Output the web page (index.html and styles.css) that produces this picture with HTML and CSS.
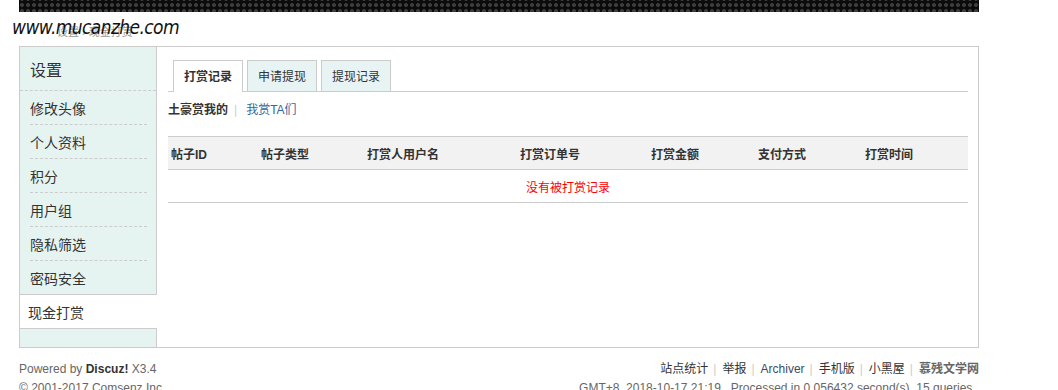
FILE: index.html
```html
<!DOCTYPE html>
<html lang="zh-CN">
<head>
  <meta charset="UTF-8" />
  <title>现金打赏 - 慕残文学网</title>
  <link rel="stylesheet" href="styles.css">
</head>
<body>

  <div class="topbar"></div>

  <div class="crumb">
    <span class="crumb-text">设置 › 现金打赏</span>
    <span class="watermark">www.mucanzhe.com</span>
  </div>

  <div class="wrap">
    <div class="side">
      <h2>设置</h2>
      <ul>
        <li>修改头像</li>
        <li>个人资料</li>
        <li>积分</li>
        <li>用户组</li>
        <li>隐私筛选</li>
        <li class="last">密码安全</li>
        <li class="active">现金打赏</li>
      </ul>
    </div>

    <div class="main">
      <ul class="tabs">
        <li class="on">打赏记录</li>
        <li>申请提现</li>
        <li>提现记录</li>
      </ul>

      <div class="subtabs">
        <b>土豪赏我的</b><span class="pipe">|</span><a href="#">我赏TA们</a>
      </div>

      <table class="list">
        <tr>
          <th class="c1">帖子ID</th>
          <th class="c2">帖子类型</th>
          <th class="c3">打赏人用户名</th>
          <th class="c4">打赏订单号</th>
          <th class="c5">打赏金额</th>
          <th class="c6">支付方式</th>
          <th class="c7">打赏时间</th>
        </tr>
        <tr>
          <td colspan="7" class="empty">没有被打赏记录</td>
        </tr>
      </table>
    </div>
  </div>

  <div class="footer">
    <div class="left">
      <p>Powered by <b>Discuz!</b> X3.4</p>
      <p>© 2001-2017 Comsenz Inc.</p>
    </div>
    <div class="right">
      <p>
        <a href="#">站点统计</a><span class="pipe">|</span><a href="#">举报</a><span class="pipe">|</span><a href="#" class="arc">Archiver</a><span class="pipe">|</span><a href="#">手机版</a><span class="pipe">|</span><a href="#">小黑屋</a><span class="pipe">|</span><b>慕残文学网</b>
      </p>
      <p class="gmt">GMT+8, 2018-10-17 21:19 , Processed in 0.056432 second(s), 15 queries .</p>
    </div>
  </div>

</body>
</html>
```

FILE: styles.css
```css
body {
  margin: 0;
  font-family: "Liberation Sans", "Noto Sans CJK SC", sans-serif;
  font-size: 12px;
  color: #333;
  background: #fff;
}

ul {
  list-style: none;
  margin: 0;
  padding: 0;
}

a {
  color: #336699;
  text-decoration: none;
}

.topbar {
  width: 960px;
  height: 12px;
  margin-left: 19px;
  background-color: #0b0b0b;
  background-image: radial-gradient(circle, #3c3c3c 1.8px, transparent 2.2px);
  background-size: 6px 6px;
  background-position: 0 2px;
}

.crumb {
  position: relative;
  height: 34px;
  margin-left: 19px;
}

.crumb-text {
  display: block;
  padding: 11px 0 0 38px;
  color: #999;
  font-size: 11px;
}

.watermark {
  position: absolute;
  left: -7px;
  top: 4px;
  font-family: "DejaVu Sans Condensed", "DejaVu Sans", sans-serif;
  font-style: italic;
  font-size: 19px;
  letter-spacing: -0.6px;
  color: #111;
}

.wrap {
  display: flex;
  width: 958px;
  height: 300px;
  margin-left: 19px;
  border: 1px solid #ccc;
}

/* left menu */
.side {
  width: 136px;
  background: #e6f4f1;
  border-right: 1px solid #ccc;
}

.side h2 {
  margin: 0;
  height: 41px;
  padding: 2px 0 0 10px;
  line-height: 44px;
  font-size: 16px;
  font-weight: normal;
  border-bottom: 1px dashed #ccc;
}

.side li {
  margin: 0 9px 0 10px;
  height: 31px;
  padding-top: 2px;
  line-height: 33px;
  font-size: 14px;
  border-bottom: 1px dashed #ccc;
}

.side li.last {
  border-bottom: none;
}

.side li.active {
  margin: 0 -1px 0 0;
  padding-left: 8px;
  background: #fff;
  border-top: 1px solid #ccc;
  border-bottom: 1px solid #ccc;
}

/* right content */
.main {
  flex: 1;
  padding: 13px 10px 0 11px;
}

.tabs {
  display: flex;
  gap: 4px;
  padding-left: 5px;
  border-bottom: 1px solid #ccc;
}

.tabs li {
  height: 30px;
  line-height: 32px;
  padding: 0 10px;
  margin-bottom: -1px;
  border: 1px solid #ccc;
  border-bottom: none;
  background: #e8f3f3;
  font-size: 12px;
}

.tabs li.on {
  background: #fff;
  font-weight: bold;
  height: 31px;
}

.subtabs {
  height: 44px;
  line-height: 37px;
}

.pipe {
  color: #ccc;
  margin: 0 9px 0 6px;
}

.list {
  width: 800px;
  table-layout: fixed;
  border-collapse: collapse;
}

.list th {
  box-sizing: border-box;
  height: 33px;
  padding: 0 0 0 3px;
  text-align: left;
  background: #f2f2f2;
  border-top: 1px solid #ccc;
  border-bottom: 1px solid #ccc;
  font-weight: bold;
}

.list .c1 { width: 90px; }
.list .c2 { width: 106px; }
.list .c3 { width: 153px; }
.list .c4 { width: 131px; }
.list .c5 { width: 107px; }
.list .c6 { width: 107px; }

.list td {
  height: 32px;
  padding: 0;
  border-bottom: 1px solid #ccc;
}

.list .empty {
  text-align: center;
  color: #f00;
}

/* footer */
.footer {
  display: flex;
  justify-content: space-between;
  width: 960px;
  margin-left: 19px;
  padding-top: 13px;
  color: #666;
}

.footer p {
  margin: 0 0 3px;
  line-height: 16px;
}

.footer .left b {
  color: #333;
}

.footer .right {
  text-align: right;
}

.footer .right a {
  color: #333;
}

.footer .right a.arc {
  color: #3b4a66;
}

.footer .right .pipe {
  margin: 0 6px 0 5px;
}

.footer .gmt {
  color: #666;
}
```
